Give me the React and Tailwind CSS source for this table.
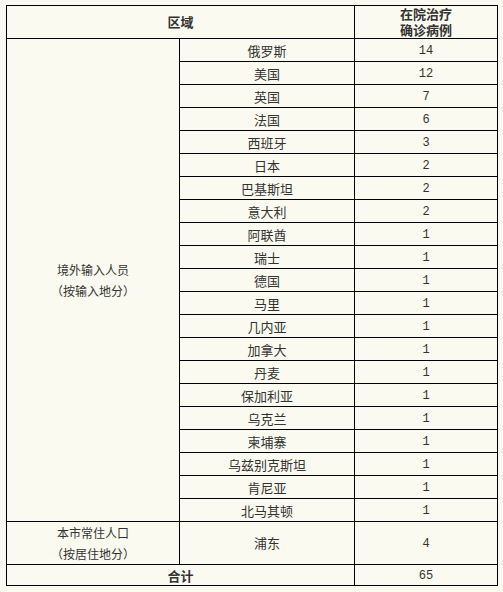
import React from 'react';

const abroad = [
  ['俄罗斯', 14],
  ['美国', 12],
  ['英国', 7],
  ['法国', 6],
  ['西班牙', 3],
  ['日本', 2],
  ['巴基斯坦', 2],
  ['意大利', 2],
  ['阿联酋', 1],
  ['瑞士', 1],
  ['德国', 1],
  ['马里', 1],
  ['几内亚', 1],
  ['加拿大', 1],
  ['丹麦', 1],
  ['保加利亚', 1],
  ['乌克兰', 1],
  ['柬埔寨', 1],
  ['乌兹别克斯坦', 1],
  ['肯尼亚', 1],
  ['北马其顿', 1],
];

const cell = 'border border-black text-center p-0 align-middle';
const num = "font-['Liberation_Mono',monospace] text-[12px] leading-[15px] pt-[2px]";

export default function App() {
  return (
    <div className="min-h-[592px] w-[503px] bg-[#fafaf0] pt-[5px] pl-[6px] text-[#333] text-[12px] font-['Noto_Sans_CJK_SC','Noto_Sans',sans-serif]">
      <table className="border-collapse table-fixed w-[491px]">
        <colgroup>
          <col className="w-[173px]" />
          <col className="w-[175px]" />
          <col className="w-[143px]" />
        </colgroup>
        <tbody>
          <tr className="h-[33px]">
            <td colSpan={2} className={`${cell} font-bold text-[13px]`}>区域</td>
            <td className={`${cell} font-bold text-[13px] leading-[16px]`}>
              在院治疗
              <br />
              确诊病例
            </td>
          </tr>
          {abroad.map(([name, n], i) => (
            <tr key={name} className="h-[23px]">
              {i === 0 && (
                <td rowSpan={abroad.length} className={`${cell} leading-[21px] text-[12px]`}>
                  境外输入人员
                  <br />
                  （按输入地分）
                </td>
              )}
              <td className={`${cell} text-[13px] leading-[15px]`}>{name}</td>
              <td className={`${cell} ${num}`}>{n}</td>
            </tr>
          ))}
          <tr className="h-[43px]">
            <td className={`${cell} leading-[21px] text-[12px]`}>
              本市常住人口
              <br />
              （按居住地分）
            </td>
            <td className={`${cell} text-[13px]`}>浦东</td>
            <td className={`${cell} ${num}`}>4</td>
          </tr>
          <tr className="h-[21px]">
            <td colSpan={2} className={`${cell} font-bold text-[13px] leading-[15px]`}>合计</td>
            <td className={`${cell} ${num}`}>65</td>
          </tr>
        </tbody>
      </table>
    </div>
  );
}
